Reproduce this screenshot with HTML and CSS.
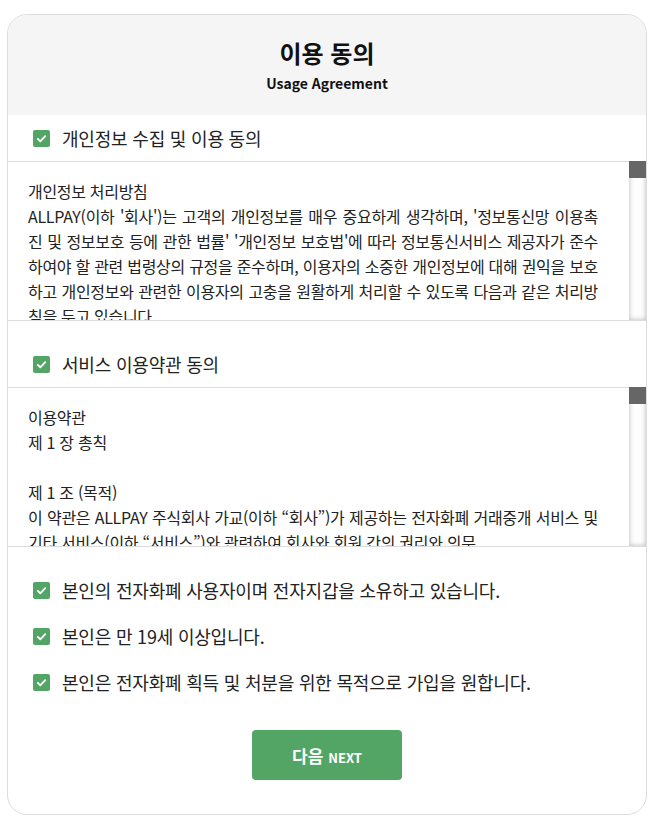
FILE: index.html
```html
<!DOCTYPE html>
<html lang="ko">
<head>
  <meta charset="UTF-8" />
  <meta name="viewport" content="width=device-width, initial-scale=1.0" />
  <title>이용 동의</title>
  <link rel="stylesheet" href="styles.css">
</head>
<body>
  <div class="card">
    <header class="card-head">
      <h1 class="title">이용 동의</h1>
      <div class="subtitle">Usage Agreement</div>
    </header>

    <!-- 개인정보 -->
    <label class="agree-row">
      <span class="check"><svg viewBox="0 0 17 17"><path d="M4.8 8.9l2.5 2.4 4.9-5.1" /></svg></span>
      개인정보 수집 및 이용 동의
    </label>
    <div class="terms">
      <div class="terms-text">
        <p>개인정보 처리방침</p>
        <p>ALLPAY(이하 '회사')는 고객의 개인정보를 매우 중요하게 생각하며, '정보통신망 이용촉진 및 정보보호 등에 관한 법률' '개인정보 보호법'에 따라 정보통신서비스 제공자가 준수하여야 할 관련 법령상의 규정을 준수하며, 이용자의 소중한 개인정보에 대해 권익을 보호하고 개인정보와 관련한 이용자의 고충을 원활하게 처리할 수 있도록 다음과 같은 처리방침을 두고 있습니다.</p>
        <p>&nbsp;</p>
        <p>1. 수집하는 개인정보의 항목 및 수집방법</p>
        <p>회사는 회원가입, 원활한 고객상담, 각종 서비스의 제공을 위해 최초 회원가입 당시 아래와 같은 개인정보를 수집하고 있습니다.</p>
        <p>- 필수항목 : 이름, 생년월일, 성별, 휴대전화번호, 이메일, 비밀번호, 전자지갑 주소</p>
        <p>- 선택항목 : 주소, 직업, 관심분야</p>
        <p>&nbsp;</p>
        <p>2. 개인정보의 수집 및 이용목적</p>
        <p>회사는 수집한 개인정보를 서비스 제공에 관한 계약 이행, 회원 관리, 신규 서비스 개발 및 마케팅을 위해 활용합니다.</p>
        <p>&nbsp;</p>
        <p>3. 개인정보의 보유 및 이용기간</p>
        <p>회사는 원칙적으로 개인정보 수집 및 이용목적이 달성된 후에는 해당 정보를 지체 없이 파기합니다. 단, 관계 법령의 규정에 의하여 보존할 필요가 있는 경우 관계 법령에서 정한 일정한 기간 동안 회원정보를 보관합니다.</p>
      </div>
      <div class="scrollbar"><div class="scrollbar-thumb"></div></div>
    </div>

    <!-- 서비스 이용약관 -->
    <label class="agree-row agree-row--spaced">
      <span class="check"><svg viewBox="0 0 17 17"><path d="M4.8 8.9l2.5 2.4 4.9-5.1" /></svg></span>
      서비스 이용약관 동의
    </label>
    <div class="terms">
      <div class="terms-text">
        <p>이용약관</p>
        <p>제 1 장 총칙</p>
        <p>&nbsp;</p>
        <p>제 1 조 (목적)</p>
        <p>이 약관은 ALLPAY 주식회사 가교(이하 “회사”)가 제공하는 전자화폐 거래중개 서비스 및 기타 서비스(이하 “서비스”)와 관련하여 회사와 회원 간의 권리와 의무,<br>책임사항 및 기타 필요한 사항을 규정함을 목적으로 합니다.</p>
        <p>&nbsp;</p>
        <p>제 2 조 (용어의 정의)</p>
        <p>1. “회원”이라 함은 이 약관에 동의하고 회사와 서비스 이용계약을 체결하여 아이디를 부여받은 자를 말합니다.</p>
        <p>2. “전자지갑”이라 함은 회원이 보유한 전자화폐를 보관하고 송수신할 수 있도록 제공되는 전자적 장치를 말합니다.</p>
      </div>
      <div class="scrollbar"><div class="scrollbar-thumb"></div></div>
    </div>

    <!-- 기타 확인 항목 -->
    <div class="confirm-list">
      <label class="agree-row">
        <span class="check"><svg viewBox="0 0 17 17"><path d="M4.8 8.9l2.5 2.4 4.9-5.1" /></svg></span>
        본인의 전자화폐 사용자이며 전자지갑을 소유하고 있습니다.
      </label>
      <label class="agree-row">
        <span class="check"><svg viewBox="0 0 17 17"><path d="M4.8 8.9l2.5 2.4 4.9-5.1" /></svg></span>
        본인은 만 19세 이상입니다.
      </label>
      <label class="agree-row">
        <span class="check"><svg viewBox="0 0 17 17"><path d="M4.8 8.9l2.5 2.4 4.9-5.1" /></svg></span>
        본인은 전자화폐 획득 및 처분을 위한 목적으로 가입을 원합니다.
      </label>
    </div>

    <div class="actions">
      <button class="next-btn" type="button">다음 <small>NEXT</small></button>
    </div>
  </div>
</body>
</html>
```

FILE: styles.css
```css
:root {
  --green: #52a565;
  --line: #dcdcdc;
  --text: #222;
}

* {
  box-sizing: border-box;
  margin: 0;
  padding: 0;
}

body {
  font-family: "Noto Sans CJK KR", "Noto Sans", sans-serif;
  color: var(--text);
  background: #fff;
  padding: 14px 0 0 7px;
}

.card {
  width: 640px;
  border: 1px solid var(--line);
  border-radius: 20px;
  overflow: hidden;
  padding-bottom: 34px;
}

/* Header */
.card-head {
  background: #f5f5f5;
  height: 100px;
  display: flex;
  flex-direction: column;
  align-items: center;
  padding-top: 21px;
}

.title {
  font-size: 24px;
  font-weight: 700;
  line-height: 34px;
  color: #111;
}

.subtitle {
  font-size: 14px;
  font-weight: 700;
  line-height: 20px;
  margin-top: 3px;
  color: #111;
}

/* Checkbox rows */
.agree-row {
  display: flex;
  align-items: center;
  gap: 12px;
  height: 46px;
  padding-left: 25px;
  font-size: 18px;
  letter-spacing: -0.2px;
  cursor: pointer;
}
.agree-row--spaced {
  height: 66px;
  padding-top: 20px;
}

.check {
  width: 17px;
  height: 17px;
  flex: none;
  border-radius: 2px;
  background: var(--green);
  display: flex;
}
.check svg {
  width: 17px;
  height: 17px;
  fill: none;
  stroke: #fff;
  stroke-width: 1.9;
  stroke-linecap: round;
  stroke-linejoin: round;
}

/* Scrollable terms with a drawn scrollbar */
.terms {
  display: flex;
  height: 160px;
  border-bottom: 1px solid var(--line);
}

.terms-text {
  flex: 1;
  overflow-y: auto;
  scrollbar-width: none;
  border-top: 1px solid var(--line);
  padding: 17px 31px 0 20px;
  font-size: 16px;
  line-height: 25px;
  letter-spacing: -0.3px;
  text-align: justify;
  word-break: break-all;
}

.scrollbar {
  width: 17px;
  flex: none;
  background: #fdfdfd;
  box-shadow: inset 0 0 5px rgba(0, 0, 0, .28);
}
.scrollbar-thumb {
  height: 17px;
  background: #666;
}

/* Bottom confirmations */
.confirm-list {
  padding-top: 20px;
}

.actions {
  display: flex;
  justify-content: center;
  margin-top: 25px;
}

.next-btn {
  width: 150px;
  height: 50px;
  border: none;
  border-radius: 4px;
  background: var(--green);
  color: #fff;
  font-family: inherit;
  font-size: 17px;
  font-weight: 700;
  cursor: pointer;
}
.next-btn small {
  font-size: 13px;
  font-weight: 700;
}
```
